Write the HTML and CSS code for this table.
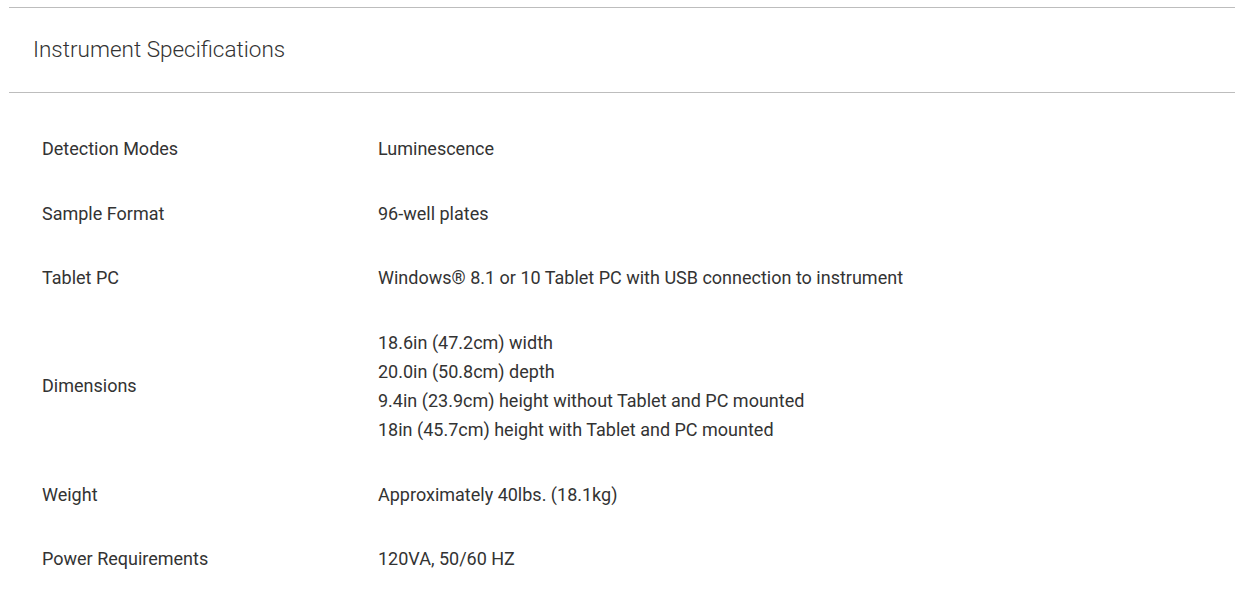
FILE: index.html
```html
<!DOCTYPE html>
<html lang="en">
<head>
<meta charset="utf-8">
<title>Instrument Specifications</title>
<link rel="stylesheet" href="styles.css">
</head>
<body>
<section class="panel">
  <header class="panel-head">
    <h2 class="panel-title">Instrument Specifications</h2>
  </header>
  <dl class="specs">
    <div class="row"><dt>Detection Modes</dt><dd>Luminescence</dd></div>
    <div class="row"><dt>Sample Format</dt><dd>96-well plates</dd></div>
    <div class="row"><dt>Tablet PC</dt><dd>Windows® 8.1 or 10 Tablet PC with USB connection to instrument</dd></div>
    <div class="row"><dt>Dimensions</dt><dd>18.6in (47.2cm) width<br>20.0in (50.8cm) depth<br>9.4in (23.9cm) height without Tablet and PC mounted<br>18in (45.7cm) height with Tablet and PC mounted</dd></div>
    <div class="row"><dt>Weight</dt><dd>Approximately 40lbs. (18.1kg)</dd></div>
    <div class="row"><dt>Power Requirements</dt><dd>120VA, 50/60 HZ</dd></div>
  </dl>
</section>
</body>
</html>
```

FILE: styles.css
```css
html, body {
  margin: 0;
  padding: 0;
  background: #fff;
}
body {
  font-family: Roboto, "Liberation Sans", sans-serif;
  color: #333;
}
.panel {
  margin: 7px 0 0 9px;
  border-top: 1px solid #bdbdbd;
}
.panel-head {
  height: 85px;
  box-sizing: border-box;
  display: flex;
  align-items: center;
  padding: 0 0 3px 24px;
  border-bottom: 1px solid #bdbdbd;
}
.panel-title {
  margin: 0;
  font-weight: 300;
  font-size: 22.5px;
  color: #333;
}
.specs {
  margin: 23px 0 0 0;
  padding-left: 33px;
}
.row {
  display: grid;
  grid-template-columns: 336px 1fr;
  align-items: center;
  padding: 17.85px 0;
  font-size: 18px;
  line-height: 29px;
}
.row dt, .row dd {
  margin: 0;
}
```
